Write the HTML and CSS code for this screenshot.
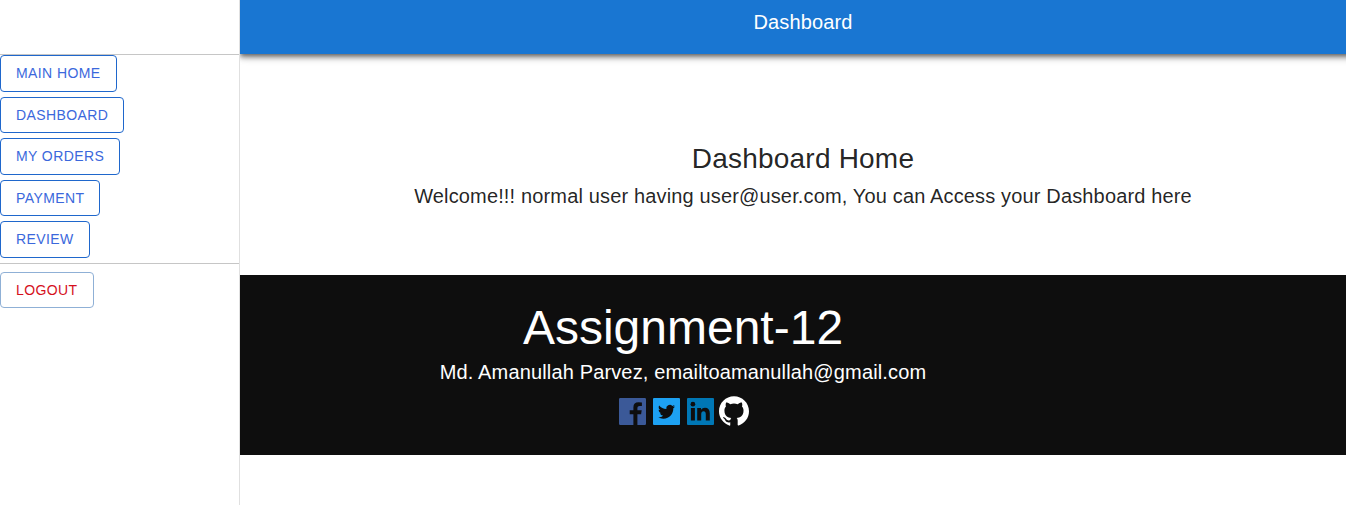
FILE: index.html
```html
<!DOCTYPE html>
<html lang="en">
<head>
<meta charset="utf-8">
<title>Dashboard</title>
<link rel="stylesheet" href="styles.css">
</head>
<body>
<div class="layout">
  <aside class="sidebar">
    <div class="toolbar"></div>
    <nav class="menu">
      <button class="btn">Main Home</button>
      <button class="btn">Dashboard</button>
      <button class="btn">My Orders</button>
      <button class="btn">Payment</button>
      <button class="btn">Review</button>
    </nav>
    <div class="account">
      <button class="btn btn-logout">Logout</button>
    </div>
  </aside>
  <div class="page">
    <header class="appbar">Dashboard</header>
    <main class="content">
      <h1 class="title">Dashboard Home</h1>
      <p class="welcome">Welcome!!! normal user having user@user.com, You can Access your Dashboard here</p>
    </main>
    <footer class="footer">
      <h2 class="footer-title">Assignment-12</h2>
      <p class="footer-text">Md. Amanullah Parvez, emailtoamanullah@gmail.com</p>
      <div class="social">
        <svg class="icon" viewBox="0 0 27 27"><path fill="#3b5998" d="M1.2 0H25.8Q27 0 27 1.2V25.8Q27 27 25.8 27H18.4V16.3H22.1L22.7 12.2H18.4V9.8Q18.4 8.100 20.500 8.100H22.900V4.500Q21.300 4.300 19.600 4.300Q14.400 4.300 14.400 9.300V12.200H10.700V16.300H14.400V27H1.200Q0 27 0 25.800V1.200Q0 0 1.200 0Z"/></svg>
        <svg class="icon" viewBox="0 0 27 27"><rect width="27" height="27" rx="1" fill="#1da1f2"/><path fill="#0e0e0e" transform="translate(5 5.200) scale(.71)" d="M23.950 4.570a10 10 0 0 1-2.820.770 4.960 4.960 0 0 0 2.160-2.720c-.950.550-2 .950-3.130 1.180a4.920 4.920 0 0 0-8.380 4.480C7.690 8.090 4.070 6.130 1.640 3.160a4.820 4.820 0 0 0-.670 2.480c0 1.710.870 3.210 2.190 4.100a4.900 4.900 0 0 1-2.230-.620v.060a4.920 4.920 0 0 0 3.950 4.830 5 5 0 0 1-2.210.080 4.940 4.940 0 0 0 4.600 3.420A9.870 9.870 0 0 1 0 19.540a13.990 13.990 0 0 0 7.560 2.210c9.050 0 13.990-7.500 13.990-13.980 0-.210 0-.420-.020-.630a9.940 9.940 0 0 0 2.460-2.550z"/></svg>
        <svg class="icon" viewBox="0 0 27 27"><rect width="27" height="27" rx="1" fill="#0077b5"/><g fill="#0e0e0e"><circle cx="5.900" cy="6.200" r="2.350"/><path d="M3.900 10.100H7.900V22.500H3.900ZM10.200 10.100H14V11.800Q15.300 9.800 17.900 9.800Q22.800 9.800 22.800 15.600V22.500H18.800V16.500Q18.800 13.300 16.600 13.300Q14.200 13.300 14.200 16.400V22.500H10.200Z"/></g></svg>
        <svg class="icon icon-github" viewBox="0 0 24 24"><path fill="#fff" d="M12 .297c-6.630 0-12 5.373-12 12 0 5.303 3.438 9.800 8.205 11.385.6.113.82-.258.82-.577 0-.285-.010-1.040-.015-2.040-3.338.724-4.042-1.610-4.042-1.610C4.422 18.070 3.633 17.700 3.633 17.700c-1.087-.744.084-.729.084-.729 1.205.084 1.838 1.236 1.838 1.236 1.070 1.835 2.809 1.305 3.495.998.108-.776.417-1.305.760-1.605-2.665-.300-5.466-1.332-5.466-5.930 0-1.310.465-2.380 1.235-3.220-.135-.303-.540-1.523.105-3.176 0 0 1.005-.322 3.300 1.230.960-.267 1.980-.399 3-.405 1.020.006 2.040.138 3 .405 2.280-1.552 3.285-1.230 3.285-1.230.645 1.653.240 2.873.120 3.176.765.840 1.230 1.910 1.230 3.220 0 4.610-2.805 5.625-5.475 5.920.420.360.810 1.096.810 2.220 0 1.606-.015 2.896-.015 3.286 0 .315.210.690.825.570C20.565 22.092 24 17.592 24 12.297c0-6.627-5.373-12-12-12"/></svg>
      </div>
    </footer>
  </div>
</div>
</body>
</html>
```
FILE: styles.css
```css
* { box-sizing: border-box; }

body {
  margin: 0;
  overflow: hidden;
  background: #fff;
  color: rgba(0, 0, 0, 0.87);
  font-family: "Liberation Sans", Arial, sans-serif;
}

h1, h2, p { margin: 0; font-weight: 400; }

.layout { display: flex; height: 505px; }

.sidebar {
  width: 240px;
  flex: none;
  border-right: 1px solid #e0e0e0;
}

.toolbar { height: 55px; border-bottom: 1px solid #c6c6c6; }

.menu {
  display: flex;
  flex-direction: column;
  align-items: flex-start;
  gap: 5px;
  height: 209px;
  border-bottom: 1px solid #c6c6c6;
}

.account { padding-top: 7.5px; }

.btn {
  height: 36.5px;
  padding: 5px 15px;
  border: 1px solid #1f67cc;
  border-radius: 4px;
  background: transparent;
  color: #3b68dc;
  font: 400 14px/1.75 "Liberation Sans", Arial, sans-serif;
  letter-spacing: 0.4px;
  text-transform: uppercase;
}

.btn-logout { border-color: #8fb0d6; color: #d5101c; }

/* The page column runs 20px past the right edge of the window. */
.page { flex: none; width: 1126px; }

.appbar {
  height: 54px;
  padding-top: 6px;
  background: #1976d2;
  color: #fff;
  font-size: 20px;
  line-height: 32px;
  letter-spacing: 0.0075em;
  text-align: center;
  box-shadow: 0 2px 4px -1px rgba(0, 0, 0, 0.4), 0 4px 5px rgba(0, 0, 0, 0.28), 0 1px 10px rgba(0, 0, 0, 0.24);
  clip-path: inset(0 0 -16px 0);
}

.content { height: 221px; padding-top: 87px; text-align: center; }

.title { font-size: 28px; line-height: 35px; letter-spacing: 0.00735em; }

.welcome { font-size: 20px; line-height: 32px; letter-spacing: 0.0075em; margin-top: 4px; }

.footer {
  height: 180px;
  padding: 25px 240px 0 0;
  background: #0e0e0e;
  color: #fff;
  text-align: center;
}

.footer-title { font-size: 48px; line-height: 56px; }

.footer-text { font-size: 20px; line-height: 32px; letter-spacing: 0.0075em; }

.social { display: flex; justify-content: center; gap: 7px; padding: 9.5px 0 0 1px; }

.icon { width: 27px; height: 27px; }

.icon-github { width: 30px; height: 30px; margin: -1.5px 0 0 -2px; }
```
